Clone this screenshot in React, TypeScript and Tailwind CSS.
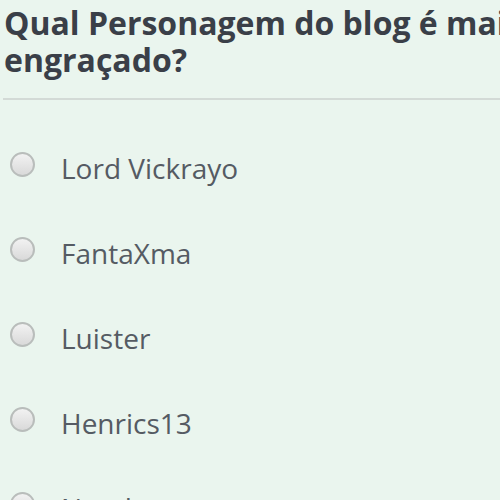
const options = ["Lord Vickrayo", "FantaXma", "Luister", "Henrics13", "Nando"];

export default function App() {
  return (
    <div className="h-[500px] w-[500px] overflow-hidden bg-[#eaf5ee] font-['Open_Sans',sans-serif]">
      <h1 className="whitespace-nowrap pl-[4px] pt-[4px] text-[32px] font-bold leading-[37px] text-[#3a3f48]">
        Qual Personagem do blog é mais
        <br />
        engraçado?
      </h1>
      <div className="ml-[3px] mt-[20px] h-[2px] bg-[#d3dad6]" />
      <ul className="mt-[52px] flex flex-col gap-[60px] pl-[10px]">
        {options.map((option) => (
          <li key={option} className="flex h-[25px] items-center gap-[26px]">
            <span className="h-[25px] w-[25px] shrink-0 rounded-full border-2 border-[#b9bdbb] bg-[linear-gradient(#f2f2f2,#d9d9d9)]" />
            <span className="pt-[8px] text-[28px] leading-[25px] text-[#555b63]">{option}</span>
          </li>
        ))}
      </ul>
    </div>
  );
}
